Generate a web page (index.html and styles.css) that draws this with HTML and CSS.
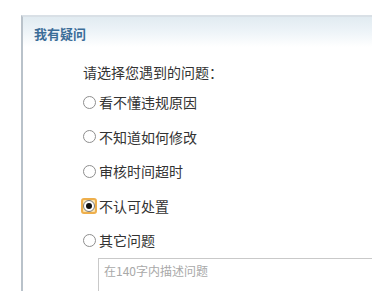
FILE: index.html
```html
<!DOCTYPE html>
<html lang="zh-CN">
<head>
<meta charset="utf-8">
<title>我有疑问</title>
<link rel="stylesheet" href="styles.css">
</head>
<body>
<div class="panel">
  <div class="panel-head"><h2 class="panel-title">我有疑问</h2></div>
  <div class="panel-body">
    <p class="question">请选择您遇到的问题：</p>
    <ul class="options">
      <li class="option"><span class="radio-wrap"><span class="radio"></span></span><span class="label">看不懂违规原因</span></li>
      <li class="option"><span class="radio-wrap"><span class="radio"></span></span><span class="label">不知道如何修改</span></li>
      <li class="option"><span class="radio-wrap"><span class="radio"></span></span><span class="label">审核时间超时</span></li>
      <li class="option"><span class="radio-wrap is-focus"><span class="radio is-checked"></span></span><span class="label">不认可处置</span></li>
      <li class="option"><span class="radio-wrap"><span class="radio"></span></span><span class="label">其它问题</span></li>
    </ul>
    <div class="textbox"><span class="placeholder">在140字内描述问题</span></div>
  </div>
</div>
</body>
</html>
```
FILE: styles.css
```css
html, body {
  margin: 0;
  padding: 0;
  background: #fff;
  overflow: hidden;
}
body {
  font-family: "Noto Sans CJK SC", "Noto Sans", sans-serif;
  color: #333;
}
.panel {
  margin: 15px 0 0 21px;
  border-top: 2px solid #d9e0e6;
  border-left: 2px solid #b9c2ca;
}
.panel-head {
  height: 30px;
  background: linear-gradient(to bottom, #e1ebf1 0%, #eef4f8 50%, #ffffff 100%);
  padding-left: 11px;
  box-sizing: border-box;
}
.panel-title {
  margin: 0;
  font-size: 13px;
  font-weight: bold;
  color: #3b6d98;
  line-height: 30px;
  padding-top: 2px;
}
.panel-body {
  padding: 15px 0 0 58px;
}
.question {
  margin: 0 0 3px 2px;
  font-size: 14px;
  line-height: 20px;
}
.options {
  list-style: none;
  margin: 0;
  padding: 0;
}
.option {
  display: flex;
  align-items: center;
  height: 34.5px;
  font-size: 14px;
}
.radio-wrap {
  width: 16px;
  height: 16px;
  box-sizing: border-box;
  display: flex;
  align-items: center;
  justify-content: center;
  border-radius: 3px;
  margin-right: 2px;
}
.radio-wrap.is-focus {
  border: 2px solid #eeaf4c;
  background: #fbe3ad;
}
.radio {
  width: 13px;
  height: 13px;
  box-sizing: border-box;
  border: 1px solid #8e8e8e;
  border-radius: 50%;
  background: #fff;
  display: flex;
  align-items: center;
  justify-content: center;
}
.radio-wrap.is-focus .radio {
  width: 12px;
  height: 12px;
  border-color: #7a7a7a;
}
.radio.is-checked::after {
  content: "";
  width: 6px;
  height: 6px;
  border-radius: 50%;
  background: #111;
}
.label {
  line-height: 20px;
}
.textbox {
  margin-left: 17px;
  height: 40px;
  border: 1px solid #c9c9c9;
  border-right: none;
  border-bottom: none;
  padding: 4px 5px 0;
  box-sizing: border-box;
  font-size: 12px;
  line-height: 16px;
}
.placeholder {
  color: #a9a9a9;
}
```
